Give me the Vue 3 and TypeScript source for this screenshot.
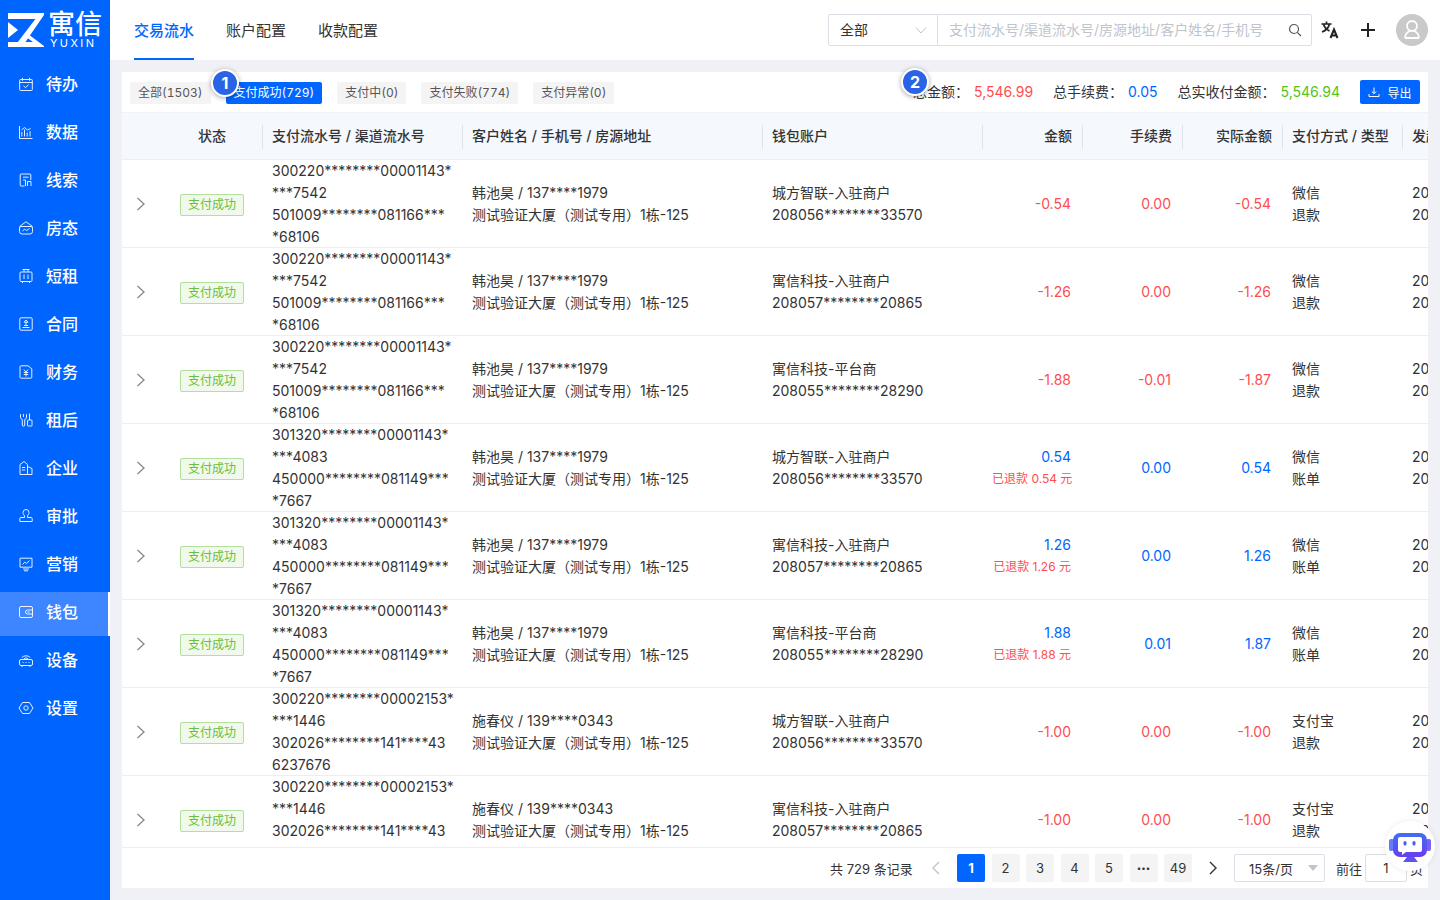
<script setup lang="ts">
import { ref } from 'vue'

interface Row {
  flow: string[]
  customer: string
  wallet: string
  walletNo: string
  amount: string
  refund?: string
  fee: string
  actual: string
  pay: string
  kind: string
}

const wallets = {
  cf: ['城方智联-入驻商户', '208056********33570'],
  yx: ['寓信科技-入驻商户', '208057********20865'],
  pt: ['寓信科技-平台商', '208055********28290'],
}

const flowA = ['300220********00001143*', '***7542', '501009********081166***', '*68106']
const flowB = ['301320********00001143*', '***4083', '450000********081149***', '*7667']
const flowC = ['300220********00002153*', '***1446', '302026********141****43', '6237676']

const makeRow = (
  flow: string[],
  customer: string,
  wallet: string[],
  amount: string,
  fee: string,
  actual: string,
  pay: string,
  kind: string,
  refund?: string,
): Row => ({
  flow,
  customer,
  wallet: wallet[0],
  walletNo: wallet[1],
  amount,
  fee,
  actual,
  pay,
  kind,
  refund,
})

const rows: Row[] = [
  makeRow(flowA, '韩池昊 / 137****1979', wallets.cf, '-0.54', '0.00', '-0.54', '微信', '退款'),
  makeRow(flowA, '韩池昊 / 137****1979', wallets.yx, '-1.26', '0.00', '-1.26', '微信', '退款'),
  makeRow(flowA, '韩池昊 / 137****1979', wallets.pt, '-1.88', '-0.01', '-1.87', '微信', '退款'),
  makeRow(flowB, '韩池昊 / 137****1979', wallets.cf, '0.54', '0.00', '0.54', '微信', '账单', '0.54'),
  makeRow(flowB, '韩池昊 / 137****1979', wallets.yx, '1.26', '0.00', '1.26', '微信', '账单', '1.26'),
  makeRow(flowB, '韩池昊 / 137****1979', wallets.pt, '1.88', '0.01', '1.87', '微信', '账单', '1.88'),
  makeRow(flowC, '施春仪 / 139****0343', wallets.cf, '-1.00', '0.00', '-1.00', '支付宝', '退款'),
  makeRow(flowC, '施春仪 / 139****0343', wallets.yx, '-1.00', '0.00', '-1.00', '支付宝', '退款'),
]

const address = '测试验证大厦（测试专用）1栋-125'

const menu = [
  { name: '待办', d: 'M2.5 3.5h11a.8.8 0 0 1 .8.8v9.4a.8.8 0 0 1-.8.8h-11a.8.8 0 0 1-.8-.8V4.300a.8.8 0 0 1 .8-.8zM4.500 1.800v3M11.500 1.800v3M1.700 6.500h12.600M5.500 9.800l2 1.800 3.200-3' },
  { name: '数据', d: 'M1.500 2v12.500h13M3.800 12.500V8M6.500 12.500V5.500M9.200 12.500V8.500M12 12.500V7M3.500 6l3-2.500 3 2.500 3-1.500' },
  { name: '线索', d: 'M12.800 8V2.800a.8.8 0 0 0-.8-.8H3a.8.8 0 0 0-.8.8v10.400a.8.8 0 0 0 .8.8h3.500M5 5.200h5.500M5 8h2.500v6M9.500 14V9.500h3.500V14' },
  { name: '房态', d: 'M1.500 6.500L8 1.800l6.500 4.700M3 6.500h10a1.500 1.500 0 0 1 1.500 1.500v3.500a2.500 2.500 0 0 1-2.500 2.500H4a2.500 2.500 0 0 1-2.500-2.500V8A1.500 1.500 0 0 1 3 6.500zM4.500 11l2.200-1.800 2 1.300 2.800-2' },
  { name: '短租', d: 'M4.500 1.500h7M6 1.500v2.500M10 1.500v2.500M3 4h10a1 1 0 0 1 1 1v7.500a1 1 0 0 1-1 1H3a1 1 0 0 1-1-1V5a1 1 0 0 1 1-1zM6 6.500v4.500M10 6.500v4.500M4.500 13.500v1.500M11.500 13.500v1.500' },
  { name: '合同', d: 'M3 1.800h10a1.200 1.200 0 0 1 1.200 1.200v10a1.200 1.200 0 0 1-1.200 1.200H3A1.200 1.200 0 0 1 1.800 13V3A1.200 1.200 0 0 1 3 1.800zM4.500 11.500h7M6 9.500h4M8 4l2 2.200H6zM8 6.200v3.300' },
  { name: '财务', d: 'M3 1.800h7l3.800 3v8.400a1 1 0 0 1-1 1H3a1 1 0 0 1-1-1V2.800a1 1 0 0 1 1-1zM5.800 5.500L8 8l2.200-2.500M8 8v4.500M5.800 8.500h4.400M5.800 10.500h4.400' },
  { name: '租后', d: 'M2.500 2.200v3a2.500 2.500 0 0 0 1.800 2.300v5.500a1.200 1.200 0 0 0 2.400 0V7.500A2.500 2.500 0 0 0 8.500 5.200v-3M5.500 2v3M11.500 1.500v6.500M10 8h3.500a.5.500 0 0 1 .5.500v5a.5.500 0 0 1-.5.500H10a.5.500 0 0 1-.5-.5v-5A.5.500 0 0 1 10 8z' },
  { name: '企业', d: 'M2 14.500V4.500L6 1.500l3.500 3v10zM2 14.500h12M9.500 6.500l4.500 2v6M4 7.500h3.200M4 10h3.200' },
  { name: '审批', d: 'M8 1.500a3 3 0 0 1 3 3c0 1.500-1 2.300-1.500 3.500v1.500h3.500a1.200 1.200 0 0 1 1.200 1.200v2.800H1.800v-2.800A1.200 1.200 0 0 1 3 9.500h3.500V8C6 6.800 5 6 5 4.500a3 3 0 0 1 3-3z' },
  { name: '营销', d: 'M2 2.200h12v9H2zM4.500 8.500l2.200-2.300 2 1.300 2.800-3M5 13h6M6 14.800h4' },
  { name: '钱包', d: 'M3 2.500h10a1.500 1.500 0 0 1 1.500 1.500v8a1.500 1.500 0 0 1-1.500 1.500H3A1.500 1.500 0 0 1 1.500 12V4A1.500 1.500 0 0 1 3 2.500zM14.500 6H9.500a2 2 0 0 0 0 4h5M9.500 8h2' },
  { name: '设备', d: 'M3 7.500h10a1.500 1.500 0 0 1 1.500 1.500v3a1.500 1.500 0 0 1-1.500 1.500H3A1.500 1.500 0 0 1 1.500 12V9A1.500 1.500 0 0 1 3 7.500zM4 13.500v1.500M12 13.500v1.500M4.500 10.500h1M7.500 10.500h1M10.500 10.500h1M3.800 5.500a6 6 0 0 1 8.400 0M5.800 7a3 3 0 0 1 4.400 0' },
  { name: '设置', d: 'M4.500 2.500h7L15 8l-3.500 5.500h-7L1 8zM8 5.800a2.200 2.200 0 1 1 0 4.400 2.200 2.200 0 0 1 0-4.400z' },
]

const tabs = ['交易流水', '账户配置', '收款配置']
const chips = ['全部(1503)', '支付成功(729)', '支付中(0)', '支付失败(774)', '支付异常(0)']
const pages = ['1', '2', '3', '4', '5', '•••', '49']

const activeTab = ref(0)
const activeChip = ref(1)
</script>

<template>
  <div class="page">
    <aside class="side">
      <div class="logo">
        <svg class="logo-mark" viewBox="0 0 36 34" fill="#fff">
          <polygon points="0,0 36,0 32,6 0,6" />
          <polygon points="32,0 36,0 36,2 14,34 6,34" />
          <polygon points="0,9 10,17 0,25" />
          <polygon points="0,29 12,29 9,34 0,34" />
          <polygon points="20,21 36,33 36,34 14,34 16,29 25,29 18,24" />
        </svg>
        <div class="logo-text">
          <span class="logo-cn">寓信</span>
          <span class="logo-en">YUXIN</span>
        </div>
      </div>
      <nav class="menu">
        <a v-for="item in menu" :key="item.name" class="menu-item" :class="{ on: item.name === '钱包' }">
          <svg class="menu-icon" viewBox="0 0 16 16" fill="none" stroke="#fff" stroke-width="1">
            <path :d="item.d" />
          </svg>
          <span>{{ item.name }}</span>
        </a>
      </nav>
    </aside>

    <div class="main">
      <header class="top">
        <div class="tabs">
          <span v-for="(tab, i) in tabs" :key="tab" class="tab" :class="{ on: i === activeTab }">{{ tab }}</span>
        </div>
        <div class="search">
          <div class="search-type">
            <span>全部</span>
            <svg viewBox="0 0 12 12" fill="none" stroke="#c0c4cc" stroke-width="1"><path d="M1 3.500l5 5.500 5-5.500" /></svg>
          </div>
          <div class="search-input">
            <span>支付流水号/渠道流水号/房源地址/客户姓名/手机号</span>
            <svg viewBox="0 0 14 14" fill="none" stroke="#555" stroke-width="1.200"><circle cx="6" cy="6" r="4.500" /><path d="M9.300 9.300l3.700 3.700" /></svg>
          </div>
        </div>
        <span class="lang">
          <svg viewBox="0 0 20 20" fill="none" stroke="#222" stroke-width="1.700">
            <path d="M1.500 4h10M6.500 1.500V4M9.500 4c-.8 3.500-3.500 6.500-7.500 8M3.500 4c.8 3 3 5.500 6 7" />
            <path d="M10.500 18l3.500-8.500 3.500 8.500M11.700 15.500h4.600" stroke-width="2" />
          </svg>
        </span>
        <span class="plus"></span>
        <span class="avatar">
          <svg viewBox="0 0 32 32" fill="none" stroke="#fff" stroke-width="1.800">
            <circle cx="16" cy="12" r="5" />
            <path d="M9 24c0-3.500 2.500-6 5-7M23 24c0-3.500-2.500-6-5-7M9 24h14" />
          </svg>
        </span>
      </header>

      <section class="card">
        <div class="toolbar">
          <div class="chips">
            <span v-for="(chip, i) in chips" :key="chip" class="chip" :class="{ on: i === activeChip }">{{ chip }}</span>
          </div>
          <div class="totals">
            <span>总金额：<em class="red">5,546.99</em></span>
            <span>总手续费：<em class="blue">0.05</em></span>
            <span>总实收付金额：<em class="green">5,546.94</em></span>
            <button class="export">
              <svg viewBox="0 0 12 12" fill="none" stroke="#fff" stroke-width="1"><path d="M6 1.500v6M3.800 5.500L6 7.700l2.200-2.200M1 8v2.500h10V8" /></svg>
              导出
            </button>
          </div>
        </div>

        <div class="table">
          <div class="row head">
            <div></div>
            <div class="c-center">状态</div>
            <div class="sep">支付流水号 / 渠道流水号</div>
            <div class="sep">客户姓名 / 手机号 / 房源地址</div>
            <div class="sep">钱包账户</div>
            <div class="sep num">金额</div>
            <div class="sep num">手续费</div>
            <div class="sep num">实际金额</div>
            <div class="sep">支付方式 / 类型</div>
            <div class="sep">发起时间</div>
          </div>
          <div v-for="(row, i) in rows" :key="i" class="row body">
            <div class="arrow">
              <svg viewBox="0 0 10 14" fill="none" stroke="#888" stroke-width="1.300"><path d="M1.500 1l6.500 6-6.500 6" /></svg>
            </div>
            <div class="c-center"><span class="tag">支付成功</span></div>
            <div class="cell">
              <p v-for="line in row.flow" :key="line">{{ line }}</p>
            </div>
            <div class="cell">
              <p>{{ row.customer }}</p>
              <p>{{ address }}</p>
            </div>
            <div class="cell">
              <p>{{ row.wallet }}</p>
              <p>{{ row.walletNo }}</p>
            </div>
            <div class="cell num" :class="row.refund ? 'blue' : 'red'">
              <p>{{ row.amount }}</p>
              <p v-if="row.refund" class="refund">已退款 {{ row.refund }} 元</p>
            </div>
            <div class="cell num" :class="row.refund ? 'blue' : 'red'">{{ row.fee }}</div>
            <div class="cell num" :class="row.refund ? 'blue' : 'red'">{{ row.actual }}</div>
            <div class="cell">
              <p>{{ row.pay }}</p>
              <p>{{ row.kind }}</p>
            </div>
            <div class="cell">
              <p>2023-06-12 10:21:36</p>
              <p>2023-06-12 10:21:38</p>
            </div>
          </div>
        </div>

        <footer class="pager">
          <span class="total">共 729 条记录</span>
          <svg class="pg-arrow" viewBox="0 0 10 14" fill="none" stroke="#c0c4cc" stroke-width="1.400"><path d="M8 1L2 7l6 6" /></svg>
          <div class="pg-list">
            <span v-for="(p, i) in pages" :key="p" class="pg" :class="{ on: i === 0, more: p === '•••' }">{{ p }}</span>
          </div>
          <svg class="pg-arrow next" viewBox="0 0 10 14" fill="none" stroke="#333" stroke-width="1.400"><path d="M2 1l6 6-6 6" /></svg>
          <div class="pg-size">
            <span>15条/页</span>
            <i class="caret"></i>
          </div>
          <span class="goto">前往</span>
          <span class="pg-input">1</span>
          <span class="goto-end">页</span>
        </footer>
      </section>
    </div>

    <span class="dot dot-1">1</span>
    <span class="dot dot-2">2</span>
    <div class="robot">
      <svg viewBox="0 0 48 48">
        <defs>
          <linearGradient id="botFill" x1="0" y1="0" x2="0" y2="1">
            <stop offset="0" stop-color="#3f6ff5" />
            <stop offset="1" stop-color="#6a3df0" />
          </linearGradient>
        </defs>
        <rect x="3" y="17" width="5" height="12" rx="2" fill="#5f7df5" />
        <rect x="40" y="17" width="5" height="12" rx="2" fill="#7a62f0" />
        <rect x="7" y="11" width="34" height="24" rx="7" fill="url(#botFill)" />
        <path d="M14 15h20a2 2 0 0 1 2 2v11a2 2 0 0 1-2 2H20l-4 3v-3h-2a2 2 0 0 1-2-2V17a2 2 0 0 1 2-2z" fill="#fff" />
        <rect x="17.500" y="19" width="3" height="4.500" rx="1.500" fill="#4a5cf0" />
        <rect x="26.500" y="19" width="3" height="4.500" rx="1.500" fill="#4a5cf0" />
        <path d="M21 35h7l4 5H17z" fill="#5b54ee" />
      </svg>
    </div>
  </div>
</template>

<style scoped>
.page {
  position: relative;
  display: flex;
  height: 900px;
  overflow: hidden;
  background: #eff1f6;
  color: #333;
  font-family: "Inter", "Noto Sans CJK SC", sans-serif;
  font-size: 14px;
}

.side {
  flex: none;
  width: 110px;
  background: #0064ff;
  color: #fff;
}

.logo {
  display: flex;
  align-items: flex-start;
  gap: 4px;
  height: 60px;
  padding: 13px 0 0 8px;
  box-sizing: border-box;
}

.logo-mark {
  width: 36px;
  height: 34px;
}

.logo-text {
  display: flex;
  flex-direction: column;
  margin-top: -1px;
}

.logo-cn {
  font-size: 27px;
  line-height: 26px;
  font-weight: 500;
}

.logo-en {
  padding-left: 2px;
  font-size: 11px;
  line-height: 11px;
  letter-spacing: 2.4px;
}

.menu {
  display: flex;
  flex-direction: column;
  gap: 4px;
  padding-top: 4px;
}

.menu-item {
  display: flex;
  align-items: center;
  gap: 12px;
  height: 44px;
  padding: 0 0 6px 18px;
  font-size: 16px;
  font-weight: 500;
  box-sizing: border-box;
}

.menu-item.on {
  background: #3d86ff;
  border-right: 2px solid #fff;
}

.menu-icon {
  width: 16px;
  height: 16px;
  margin-top: 2px;
  opacity: 0.9;
}

.main {
  flex: 1;
  min-width: 0;
  display: flex;
  flex-direction: column;
}

.top {
  flex: none;
  display: flex;
  align-items: center;
  height: 60px;
  padding: 0 12px 0 24px;
  background: #fff;
  box-sizing: border-box;
}

.tabs {
  display: flex;
  gap: 32px;
  height: 100%;
  margin-right: auto;
}

.tab {
  display: flex;
  align-items: center;
  font-size: 15px;
  border-bottom: 2px solid transparent;
  box-sizing: border-box;
}

.tab.on {
  color: #0066ff;
  font-weight: 500;
  border-bottom-color: #0066ff;
}

.search {
  display: flex;
  width: 484px;
  height: 32px;
  border: 1px solid #dcdfe6;
  border-radius: 2px;
  box-sizing: border-box;
}

.search-type {
  display: flex;
  align-items: center;
  justify-content: space-between;
  width: 109px;
  padding: 0 10px 0 11px;
  border-right: 1px solid #dcdfe6;
  box-sizing: border-box;
}

.search-type span,
.search-input span {
  padding-bottom: 2px;
}

.search-type svg {
  width: 12px;
  height: 12px;
}

.search-input {
  flex: 1;
  display: flex;
  align-items: center;
  justify-content: space-between;
  padding: 0 9px 0 11px;
  color: #c0c4cc;
}

.search-input svg {
  width: 14px;
  height: 14px;
}

.lang {
  width: 20px;
  height: 20px;
  margin-left: 8px;
}

.plus {
  width: 14px;
  height: 14px;
  margin-left: 21px;
  background:
    linear-gradient(#222, #222) center / 100% 2px no-repeat,
    linear-gradient(#222, #222) center / 2px 100% no-repeat;
}

.avatar {
  width: 32px;
  height: 32px;
  margin-left: 21px;
  border-radius: 50%;
  background: #c9c9c9;
}

.card {
  flex: 1;
  min-height: 0;
  display: flex;
  flex-direction: column;
  margin: 12px;
  background: #fff;
  overflow: hidden;
}

.toolbar {
  flex: none;
  display: flex;
  align-items: center;
  justify-content: space-between;
  height: 41px;
  padding: 0 8px;
  border-bottom: 1px solid #f0f2f5;
  box-sizing: border-box;
}

.chips {
  display: flex;
  gap: 15px;
  margin-top: 2px;
  font-feature-settings: "tnum";
}

.chip {
  height: 22px;
  padding: 0 8px;
  border-radius: 2px;
  background: #f4f4f5;
  color: #555;
  font-size: 12px;
  line-height: 22px;
}

.chip.on {
  background: #0066ff;
  color: #fff;
}

.totals {
  display: flex;
  align-items: center;
  gap: 20px;
}

.totals > span {
  margin-bottom: 2px;
}

.totals em {
  font-style: normal;
  margin-left: 5px;
}

.red {
  color: #ff4d4f;
}

.blue {
  color: #0066ff;
}

.green {
  color: #52c41a;
}

.export {
  display: flex;
  align-items: center;
  justify-content: center;
  gap: 7px;
  width: 60px;
  height: 24px;
  padding: 0;
  border: 0;
  border-radius: 2px;
  background: #0066ff;
  color: #fff;
  font: inherit;
  font-size: 12px;
}

.export svg {
  width: 12px;
  height: 12px;
}

.table {
  flex: 1;
  min-height: 0;
  overflow: hidden;
}

.row {
  display: grid;
  grid-template-columns: 40px 100px 200px 300px 220px 100px 100px 100px 120px 200px;
  align-items: center;
  width: 1480px;
}

.head {
  height: 47px;
  background: #f5f8fc;
  font-weight: 500;
  box-shadow: inset 0 -1px 0 #ebeef5;
  white-space: nowrap;
}

.head > div {
  line-height: 22px;
  padding-bottom: 2px;
}

.sep {
  padding: 0 10px;
  border-left: 1px solid #dfe3ea;
  box-sizing: border-box;
}

.head .sep {
  padding-left: 9px;
}

.c-center {
  text-align: center;
}

.num {
  text-align: right;
}

.body {
  height: 88px;
  box-shadow: inset 0 -1px 0 #ebeef5;
  line-height: 22px;
}

.arrow {
  display: flex;
  padding-left: 14px;
  margin-top: -1px;
}

.arrow svg {
  width: 10px;
  height: 14px;
}

.tag {
  display: inline-block;
  width: 64px;
  height: 22px;
  border: 1px solid #b3e19d;
  border-radius: 2px;
  background: #f0f9eb;
  color: #67c23a;
  font-size: 12px;
  line-height: 20px;
  box-sizing: border-box;
}

.cell {
  padding: 0 10px;
  white-space: nowrap;
}

.cell.num {
  padding-right: 11px;
}

.cell p {
  margin: 0;
}

.refund {
  color: #ff4d4f;
  font-size: 12px;
}

.pager {
  flex: none;
  display: flex;
  align-items: center;
  height: 41px;
  padding-left: 708px;
  border-top: 1px solid #ebeef5;
  background: #fff;
  box-sizing: border-box;
  font-size: 13px;
}

.total {
  width: 84px;
  white-space: nowrap;
}

.pg-arrow {
  width: 10px;
  height: 14px;
  margin: 0 16px 0 17px;
}

.pg-arrow.next {
  margin: 0 16px;
}

.pg-list {
  display: flex;
  gap: 6.500px;
}

.pg {
  width: 28px;
  height: 28px;
  border-radius: 2px;
  background: #f4f4f5;
  font-size: 13px;
  line-height: 28px;
  text-align: center;
}

.pg.more {
  font-size: 8px;
}

.pg.on {
  background: #0066ff;
  color: #fff;
  font-weight: 700;
}

.pg-size {
  display: flex;
  align-items: center;
  justify-content: space-between;
  width: 91px;
  height: 28px;
  padding: 0 6px 0 14px;
  border: 1px solid #dcdfe6;
  border-radius: 2px;
  box-sizing: border-box;
}

.caret {
  width: 0;
  height: 0;
  border-left: 5px solid transparent;
  border-right: 5px solid transparent;
  border-top: 6px solid #c0c4cc;
}

.goto {
  margin-left: 11px;
}

.pg-input {
  width: 42px;
  height: 28px;
  margin-left: 3px;
  border: 1px solid #dcdfe6;
  border-radius: 2px;
  line-height: 26px;
  text-align: center;
  box-sizing: border-box;
}

.goto-end {
  margin-left: 3px;
}

.dot {
  position: absolute;
  width: 24px;
  height: 24px;
  border: 2px solid #fff;
  border-radius: 50%;
  background: #2a63e6;
  box-shadow: 0 1px 5px rgba(0, 0, 0, 0.35);
  color: #fff;
  font-size: 16px;
  font-weight: 700;
  line-height: 24px;
  text-align: center;
}

.dot-1 {
  left: 211px;
  top: 69px;
}

.dot-2 {
  left: 901px;
  top: 68px;
}

.robot {
  position: absolute;
  left: 1385px;
  top: 821px;
  width: 50px;
  height: 50px;
  border-radius: 50%;
  background: #fff;
  box-shadow: 0 0 6px rgba(0, 0, 0, 0.08);
}

.robot svg {
  display: block;
  width: 48px;
  height: 48px;
  margin: 1px;
}
</style>
